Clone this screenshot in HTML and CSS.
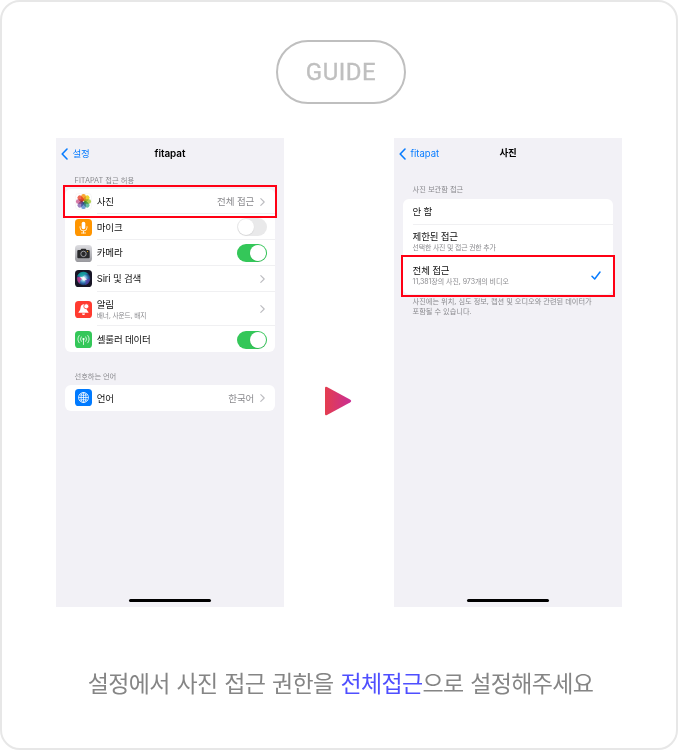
FILE: index.html
```html
<!DOCTYPE html>
<html lang="ko">
<head>
<meta charset="utf-8">
<title>GUIDE</title>
<link rel="stylesheet" href="styles.css">
</head>
<body>
<main class="guide">
  <h1 class="pill">GUIDE</h1>
  <div class="steps">
    <section class="phone">
      <header class="nav">
        <span class="back"><svg width="7" height="12" viewBox="0 0 7 12"><path d="M6 1 1.2 6 6 11" fill="none" stroke="#087cff" stroke-width="1.6" stroke-linecap="round" stroke-linejoin="round"/></svg><span class="ko-back">설정</span></span>
        <b class="title">fitapat</b>
      </header>
      <h2 class="label first">FITAPAT 접근 허용</h2>
      <div class="list">
        <div class="row">
          <svg class="icon" viewBox="0 0 17 17"><rect x=".3" y=".3" width="16.4" height="16.4" rx="4" fill="#fff" stroke="#eee" stroke-width=".5"/><g class="petals"><rect x="6.200" y=".9" width="4.600" height="7.200" rx="2.200" fill="#f99b18"/><rect x="6.200" y=".9" width="4.600" height="7.200" rx="2.200" fill="#e7cf16" transform="rotate(45 8.5 8.5)"/><rect x="6.200" y=".9" width="4.600" height="7.200" rx="2.200" fill="#a6c83c" transform="rotate(90 8.5 8.5)"/><rect x="6.200" y=".9" width="4.600" height="7.200" rx="2.200" fill="#55b895" transform="rotate(135 8.5 8.5)"/><rect x="6.200" y=".9" width="4.600" height="7.200" rx="2.200" fill="#5d91d0" transform="rotate(180 8.5 8.5)"/><rect x="6.200" y=".9" width="4.600" height="7.200" rx="2.200" fill="#8f71b8" transform="rotate(225 8.5 8.5)"/><rect x="6.200" y=".9" width="4.600" height="7.200" rx="2.200" fill="#d0679b" transform="rotate(270 8.5 8.5)"/><rect x="6.200" y=".9" width="4.600" height="7.200" rx="2.200" fill="#ec5440" transform="rotate(315 8.5 8.5)"/></g></svg>
          <div class="cell"><span class="name">사진</span><span class="value">전체 접근</span><svg class="chev" viewBox="0 0 5 8"><path d="M.8.6 4.2 4 .8 7.4"/></svg></div>
        </div>
        <div class="row">
          <svg class="icon" viewBox="0 0 17 17"><rect width="17" height="17" rx="3.6" fill="#ff9500"/><rect x="6.7" y="2.7" width="3.6" height="7.6" rx="1.8" fill="#fff"/><path d="M5 7.7v.8a3.5 3.5 0 0 0 7 0v-.8M8.500 12v2M6.500 14h4" fill="none" stroke="#fff" stroke-width=".8" stroke-linecap="round"/></svg>
          <div class="cell"><span class="name">마이크</span><span class="switch"></span></div>
        </div>
        <div class="row">
          <svg class="icon" viewBox="0 0 17 17"><defs><linearGradient id="cam" x2="0" y2="1"><stop stop-color="#dedee2"/><stop offset="1" stop-color="#98989d"/></linearGradient></defs><rect width="17" height="17" rx="3.600" fill="url(#cam)"/><path d="M3.300 5h2.200l.9-1.300h4.200l.9 1.300h2.200q1 0 1 1v6.200q0 1-1 1H3.300q-1 0-1-1V6q0-1 1-1z" fill="#29292b"/><circle cx="8.500" cy="8.900" r="2.700" fill="#29292b" stroke="#c9c9cc" stroke-width=".7"/><circle cx="12.500" cy="6.400" r=".5" fill="#ffb800"/></svg>
          <div class="cell"><span class="name">카메라</span><span class="switch on"></span></div>
        </div>
        <div class="row">
          <svg class="icon" viewBox="0 0 17 17"><defs><radialGradient id="siri"><stop stop-color="#fff"/><stop offset=".25" stop-color="#a5e3ee"/><stop offset=".65" stop-color="#3578b5"/><stop offset="1" stop-color="#163061"/></radialGradient></defs><rect width="17" height="17" rx="3.600" fill="#171525"/><circle cx="8.500" cy="8.500" r="6.800" fill="url(#siri)"/><path d="M2.100 6.500A6.600 6.600 0 0 1 13 3.700Q8 4 7.700 8.300 5 4.500 2.100 6.500z" fill="#10a99e" opacity=".75"/><path d="M2 7.500Q5 6 8 9q-3 0-3.500 4.700Q1.800 11 2 7.500z" fill="#db2c82" opacity=".75"/><path d="M8.500 8.500 15 9q-.5 5-5 6.100Q12 11 8.500 8.500z" fill="#6138aa" opacity=".65"/><path d="M5 7.200 8.300 6.500l3.700 3-3.200 1.300z" fill="#fff" opacity=".85"/></svg>
          <div class="cell"><span class="name">Siri 및 검색</span><svg class="chev" viewBox="0 0 5 8"><path d="M.8.6 4.2 4 .8 7.4"/></svg></div>
        </div>
        <div class="row tall">
          <svg class="icon" viewBox="0 0 17 17"><rect width="17" height="17" rx="3.600" fill="#ff3b30"/><path d="M8.500 3.200C6.500 3.500 5.500 5 5.500 7q0 2.300-2 4.200v.6h10v-.6q-2-1.900-2-4.200 0-3.500-3-3.800z" fill="#fff"/><path d="M7 12.600h3a1.500 1.500 0 0 1-3 0z" fill="#fff"/><circle cx="11.300" cy="5.300" r="2.500" fill="#fff" stroke="#ff3b30" stroke-width=".8"/></svg>
          <div class="cell"><span class="stack"><span class="name">알림</span><small class="sub alert">배너, 사운드, 배지</small></span><svg class="chev" viewBox="0 0 5 8"><path d="M.8.6 4.200 4 .8 7.400"/></svg></div>
        </div>
        <div class="row">
          <svg class="icon" viewBox="0 0 17 17"><rect width="17" height="17" rx="3.600" fill="#34c759"/><g fill="none" stroke="#fff" stroke-width=".75" stroke-linecap="round"><path d="M4.200 4.500a6 6 0 0 0 0 7.300M12.800 4.500a6 6 0 0 1 0 7.300M6.200 5.900a3.700 3.700 0 0 0 0 4.500M10.800 5.900a3.700 3.700 0 0 1 0 4.500M8.500 8.500v5"/></g><circle cx="8.500" cy="8" r="1.100" fill="#fff"/></svg>
          <div class="cell"><span class="name">셀룰러 데이터</span><span class="switch on"></span></div>
        </div>
      </div>
      <h2 class="label second">선호하는 언어</h2>
      <div class="list">
        <div class="row">
          <svg class="icon" viewBox="0 0 17 17"><rect width="17" height="17" rx="3.600" fill="#007aff"/><g fill="none" stroke="#fff" stroke-width=".75"><circle cx="8.500" cy="8.500" r="5"/><ellipse cx="8.500" cy="8.500" rx="2.400" ry="5"/><path d="M3.500 8.500h10M8.500 3.500v10M4.400 5.900q4.100 1 8.200 0M4.400 11.100q4.100-1 8.200 0"/></g></svg>
          <div class="cell"><span class="name">언어</span><span class="value">한국어</span><svg class="chev" viewBox="0 0 5 8"><path d="M.8.6 4.200 4 .8 7.400"/></svg></div>
        </div>
      </div>
      <i class="home"></i>
      <i class="mark mark-photos"></i>
    </section>
    <svg class="arrow" width="28" height="30" viewBox="0 0 28 30"><defs><linearGradient id="play"><stop stop-color="#e43d4f"/><stop offset="1" stop-color="#c92e94"/></linearGradient></defs><path d="M1 2.200Q1 .2 3 1L26 13.400Q28.400 15 26 16.400L3 29Q1 30 1 28z" fill="url(#play)"/></svg>
    <section class="phone">
      <header class="nav">
        <span class="back"><svg width="7" height="12" viewBox="0 0 7 12"><path d="M6 1 1.200 6 6 11" fill="none" stroke="#087cff" stroke-width="1.600" stroke-linecap="round" stroke-linejoin="round"/></svg>fitapat</span>
        <b class="title ko-title">사진</b>
      </header>
      <h2 class="label third">사진 보관함 접근</h2>
      <div class="list options">
        <div class="option"><span class="name">안 함</span></div>
        <div class="option double"><span class="name">제한된 접근</span><small class="sub">선택한 사진 및 접근 권한 추가</small></div>
        <div class="option double last"><span class="name">전체 접근</span><small class="sub count">11,381장의 사진, 973개의 비디오</small><svg class="check" viewBox="0 0 10 9"><path d="M1 5.200 3.700 8 9 1"/></svg></div>
      </div>
      <p class="note">사진에는 위치, 심도 정보, 캡션 및 오디오와 관련된 데이터가<br>포함될 수 있습니다.</p>
      <i class="home"></i>
      <i class="mark mark-full"></i>
    </section>
  </div>
  <p class="caption">설정에서 사진 접근 권한을 <em>전체접근</em>으로 설정해주세요</p>
</main>
</body>
</html>
```

FILE: styles.css
```css
* { box-sizing: border-box; }
body { margin: 0; background: #fff; font-family: Inter, "Noto Sans CJK KR", sans-serif; }
h1, h2, p { margin: 0; font-weight: 400; }
svg { display: block; flex: none; }
.guide { width: 678px; height: 750px; border: 2px solid #e7e7e7; border-radius: 20px; padding-top: 38px; display: flex; flex-direction: column; align-items: center; }
.pill { width: 130px; height: 64px; margin-left: 4px; border: 2px solid #bfbfbf; border-radius: 32px; color: #bfbfbf; font: 400 24px/60px Roboto, sans-serif; letter-spacing: .5px; -webkit-text-stroke: .35px #bfbfbf; text-align: center; }
.steps { width: 566px; margin-top: 34px; display: flex; justify-content: space-between; }
.phone { position: relative; width: 228px; height: 468.500px; background: #f2f1f6; padding: 0 9.300px; display: flex; flex-direction: column; }
.nav { height: 31px; display: grid; grid-template-columns: 1fr auto 1fr; align-items: center; }
.back { display: flex; align-items: center; gap: 4.500px; margin-left: -4.300px; color: #087cff; font-size: 9.500px; line-height: 14px; }
.ko-back { font-size: 9.500px; letter-spacing: -.3px; }
.title { font-size: 9.900px; line-height: 14px; font-weight: 600; letter-spacing: -.05px; margin-top: -1px; }
.ko-title { font-size: 9.500px; letter-spacing: -.3px; font-weight: 700; }
.label { padding-left: 9.300px; color: #8a8a8e; font-size: 7.300px; line-height: 10px; letter-spacing: 0; white-space: nowrap; }
.first { margin: 7px 0 2.700px; }
.second { margin: 20px 0 2.800px; letter-spacing: -.1px; }
.third { margin: 16px 0 4px; letter-spacing: -.05px; }
.list { background: #fff; border-radius: 6px; flex: none; }
.row { height: 25.800px; padding-left: 9.500px; display: flex; align-items: center; }
.row.tall { height: 34.500px; }
.icon { width: 17px; height: 17px; }
.petals { isolation: isolate; opacity: .88; }
.petals rect { mix-blend-mode: multiply; }
.cell { flex: 1; align-self: stretch; display: flex; align-items: center; margin-left: 5px; padding-right: 8px; border-bottom: 1px solid #f0f0f2; }
.row:last-child .cell { border: 0; }
.name { color: #111; font-size: 9.500px; line-height: 14px; letter-spacing: -.2px; margin-right: auto; padding-top: 1.400px; white-space: nowrap; }
.value { color: #8a8a8e; font-size: 9.500px; line-height: 14px; letter-spacing: -.1px; padding-top: 1.400px; }
.chev { width: 5px; height: 8px; margin: 1px 1.500px 0 6px; }
.chev path { fill: none; stroke: #bcbcc0; stroke-width: 1.100; stroke-linecap: round; stroke-linejoin: round; }
.stack { display: flex; flex-direction: column; margin-right: auto; padding-top: 1px; }
.stack .name, .double .name { padding: 0; line-height: 13px; }
.sub { color: #8a8a8e; font-size: 6.900px; line-height: 10px; letter-spacing: -.16px; white-space: nowrap; }
.alert { font-size: 6.700px; letter-spacing: -.1px; }
.count { font-size: 7px; letter-spacing: -.05px; }
.switch { width: 30px; height: 18px; margin-top: .8px; border-radius: 9px; background: #e9e9ea; padding: 1px; display: flex; }
.switch::before { content: ""; width: 16px; height: 16px; border-radius: 50%; background: #fff; box-shadow: 0 .5px 1px #0002; }
.switch.on { background: #34c759; justify-content: flex-end; }
.options { padding-left: 9.300px; }
.option { position: relative; height: 25.600px; border-bottom: 1px solid #f0f0f2; display: flex; flex-direction: column; justify-content: center; }
.double { height: 34.600px; padding-bottom: 1px; }
.double:nth-child(2), .last { border: 0; }
.check { position: absolute; right: 12px; top: 12px; width: 10px; height: 9px; }
.check path { fill: none; stroke: #087cff; stroke-width: 1.500; stroke-linecap: round; stroke-linejoin: round; }
.note { padding: 3.500px 0 0 9.300px; color: #8a8a8e; font-size: 7.200px; line-height: 9.500px; white-space: nowrap; }
.home { width: 82px; height: 3px; border-radius: 2px; background: #000; margin: auto auto 4.500px; }
.mark { position: absolute; left: 7px; width: 214px; border: 2px solid #ff0014; }
.mark-photos { top: 47px; height: 33px; }
.mark-full { top: 117px; height: 42px; }
.arrow { align-self: flex-start; margin: 248px 2px 0 0; }
.caption { margin-top: 57px; margin-left: 3px; color: #858585; font: 400 23px/36px "Noto Sans CJK KR", sans-serif; letter-spacing: -.650px; word-spacing: 1px; white-space: nowrap; }
.caption em { color: #4f4fff; font-style: normal; }
```
